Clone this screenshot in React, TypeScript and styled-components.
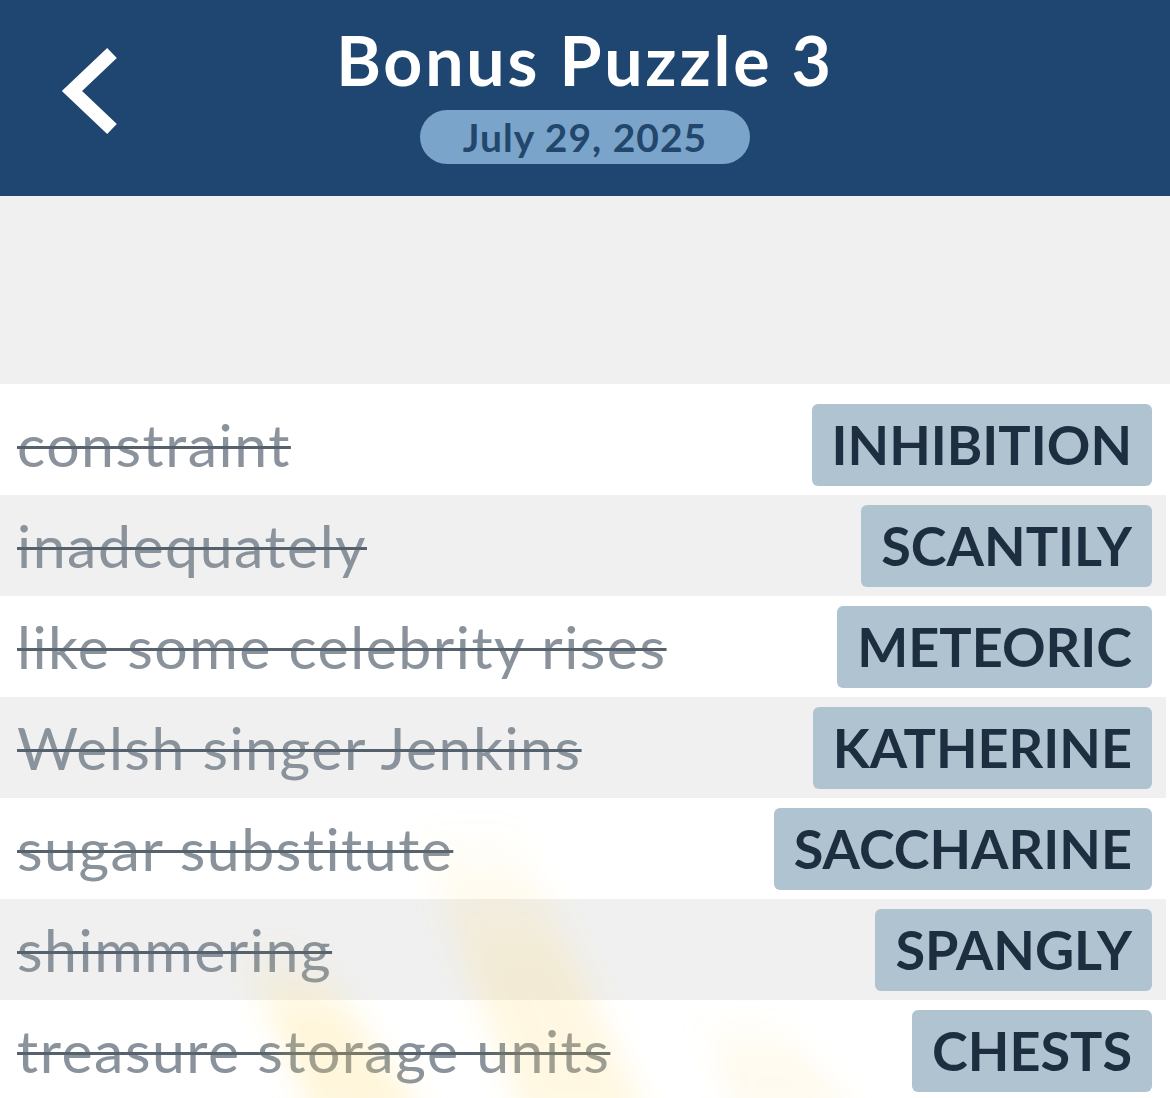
import React from "react"
import styled, { createGlobalStyle } from "styled-components"

type Entry = {
  clue: string
  answer: string
}

const entries: Entry[] = [
  { clue: "constraint", answer: "INHIBITION" },
  { clue: "inadequately", answer: "SCANTILY" },
  { clue: "like some celebrity rises", answer: "METEORIC" },
  { clue: "Welsh singer Jenkins", answer: "KATHERINE" },
  { clue: "sugar substitute", answer: "SACCHARINE" },
  { clue: "shimmering", answer: "SPANGLY" },
  { clue: "treasure storage units", answer: "CHESTS" },
]

const GlobalStyle = createGlobalStyle`
  html, body {
    margin: 0;
    padding: 0;
    background: #f0f0f0;
    font-family: Lato, "Open Sans", sans-serif;
    overflow: hidden;
  }
`

const Header = styled.header`
  height: 196px;
  box-sizing: border-box;
  padding-top: 26px;
  background: #1e4670;
  display: grid;
  grid-template-columns: 1fr auto 1fr;
  align-items: start;
`

const BackButton = styled.button`
  justify-self: start;
  margin: 14px 0 0 55px;
  padding: 0;
  border: 0;
  background: none;
  width: 70px;
  height: 100px;
  cursor: pointer;
`

const TitleBlock = styled.div`
  display: flex;
  flex-direction: column;
  align-items: center;
`

const Title = styled.h1`
  margin: 0;
  font-size: 68px;
  line-height: 68px;
  font-weight: 700;
  letter-spacing: 2.8px;
  color: #ffffff;
  white-space: nowrap;
`

const DatePill = styled.div`
  margin-top: 16px;
  width: 330px;
  height: 54px;
  border-radius: 27px;
  background: #7aa4c9;
  color: #23466c;
  font-size: 39px;
  font-weight: 700;
  letter-spacing: 1px;
  display: flex;
  align-items: center;
  justify-content: center;
`

const Spacer = styled.div`
  height: 188px;
  background: #f0f0f0;
`

const List = styled.div`
  position: relative;
  background: #ffffff;
  padding: 10px 4px 0 0;
`

const Row = styled.div<{ $shaded: boolean }>`
  height: 101px;
  box-sizing: border-box;
  padding: 0 14px 0 17px;
  display: flex;
  align-items: center;
  justify-content: space-between;
  background: ${p => (p.$shaded ? "#f0f0f0" : "#ffffff")};
`

const Clue = styled.span`
  font-size: 59px;
  letter-spacing: 1.5px;
  color: #8a939c;
  text-decoration: line-through;
  text-decoration-color: #55626e;
  text-decoration-thickness: 3px;
  white-space: nowrap;
`

const Answer = styled.span`
  height: 82px;
  padding: 0 20px;
  border-radius: 6px;
  background: #b0c3d0;
  color: #1c2e3f;
  font-size: 54px;
  font-weight: 700;
  display: flex;
  align-items: center;
  white-space: nowrap;
`

const Rays = styled.svg`
  position: absolute;
  left: 0;
  bottom: 0;
  width: 1170px;
  height: 300px;
  pointer-events: none;
`

const BackIcon = () => (
  <svg width="70" height="100" viewBox="0 0 70 100">
    <polyline
      points="57,13 17,51 57,89"
      fill="none"
      stroke="#ffffff"
      strokeWidth="14"
      strokeLinejoin="miter"
    />
  </svg>
)

const App: React.FC = () => (
  <>
    <GlobalStyle />
    <Header>
      <BackButton aria-label="Back">
        <BackIcon />
      </BackButton>
      <TitleBlock>
        <Title>Bonus Puzzle 3</Title>
        <DatePill>July 29, 2025</DatePill>
      </TitleBlock>
      <div />
    </Header>
    <Spacer />
    <List>
      {entries.map((e, i) => (
        <Row key={e.answer} $shaded={i % 2 === 1}>
          <Clue>{e.clue}</Clue>
          <Answer>{e.answer}</Answer>
        </Row>
      ))}
      <Rays viewBox="0 0 1170 300">
        <defs>
          <filter id="soft" x="-20%" y="-20%" width="140%" height="140%">
            <feGaussianBlur stdDeviation="14" />
          </filter>
          <linearGradient id="fade" x1="0" y1="0" x2="0" y2="1">
            <stop offset="0" stopColor="#ffd45a" stopOpacity="0" />
            <stop offset="0.45" stopColor="#ffd45a" stopOpacity="1" />
            <stop offset="1" stopColor="#ffd45a" stopOpacity="1" />
          </linearGradient>
        </defs>
        <g filter="url(#soft)">
          <polygon points="240,150 300,140 430,320 315,320" fill="url(#fade)" opacity="0.22" />
          <polygon points="415,30 510,20 650,320 525,320" fill="url(#fade)" opacity="0.18" />
          <polygon points="700,220 770,210 860,320 740,320" fill="url(#fade)" opacity="0.1" />
        </g>
      </Rays>
    </List>
  </>
)

export default App
